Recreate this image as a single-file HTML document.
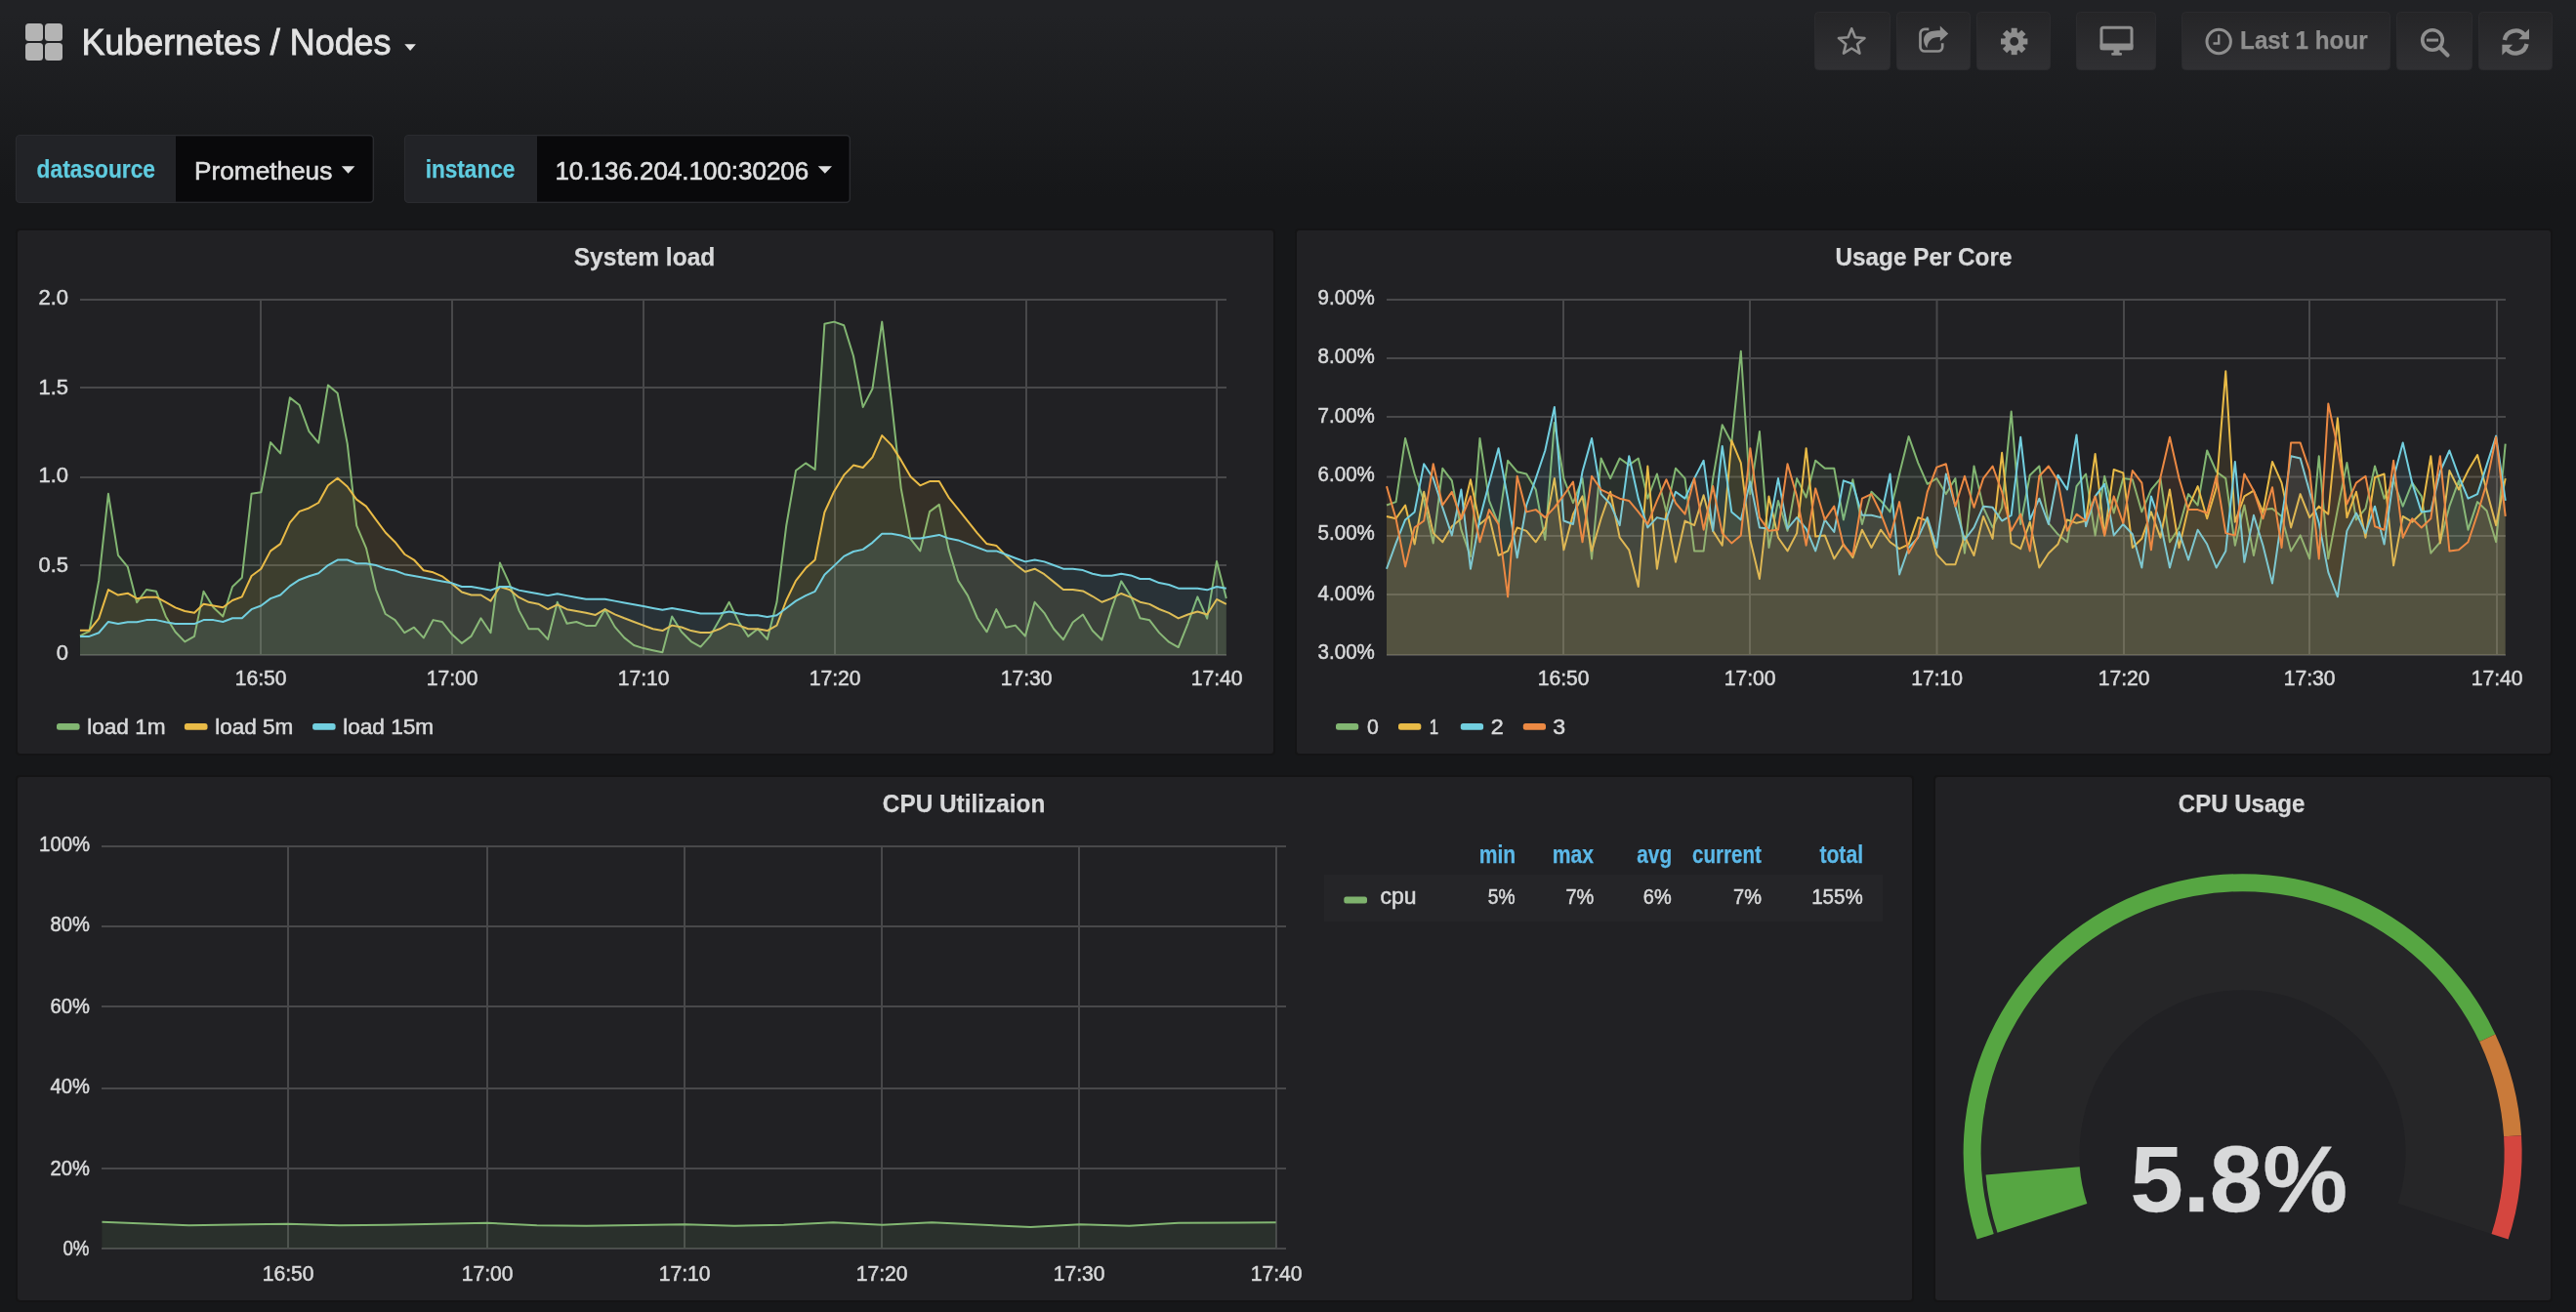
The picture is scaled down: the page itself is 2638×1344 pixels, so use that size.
<!DOCTYPE html><html><head><meta charset="utf-8"><title>Kubernetes / Nodes</title>
<style>html,body{margin:0;padding:0;background:#161719;overflow:hidden}svg{display:block;will-change:transform}text{font-family:"Liberation Sans", sans-serif}</style></head><body>
<svg width="2638" height="1344" viewBox="0 0 2638 1344">
<defs>
<linearGradient id="pg" x1="0" y1="0" x2="0" y2="1344" gradientUnits="userSpaceOnUse">
<stop offset="0.01" stop-color="#212225"/><stop offset="0.15" stop-color="#161719"/></linearGradient>
<linearGradient id="bt" x1="0" y1="0" x2="0" y2="1">
<stop offset="0" stop-color="#252527"/><stop offset="1" stop-color="#303033"/></linearGradient>
</defs>
<rect x="0" y="0" width="2638" height="1344" fill="url(#pg)"/>
<rect x="26" y="24" width="18" height="18" rx="3.5" fill="#b4b4b4"/>
<rect x="46" y="24" width="18" height="18" rx="3.5" fill="#b4b4b4"/>
<rect x="26" y="44" width="18" height="18" rx="3.5" fill="#b4b4b4"/>
<rect x="46" y="44" width="18" height="18" rx="3.5" fill="#b4b4b4"/>
<text x="83.41" y="55.8" font-size="36" fill="#e3e3e3" text-anchor="start" font-weight="normal" textLength="317.1" lengthAdjust="spacingAndGlyphs" stroke="#e3e3e3" stroke-width="0.86">Kubernetes / Nodes</text>
<polygon points="414.3,45.2 425.9,45.2 420.1,51.9" fill="#e3e3e3"/>
<rect x="1858.5" y="12.5" width="77" height="59" rx="4" fill="url(#bt)" stroke="#2b2b2e" stroke-width="1"/>
<rect x="1942.5" y="12.5" width="75" height="59" rx="4" fill="url(#bt)" stroke="#2b2b2e" stroke-width="1"/>
<rect x="2024.5" y="12.5" width="75" height="59" rx="4" fill="url(#bt)" stroke="#2b2b2e" stroke-width="1"/>
<rect x="2126.5" y="12.5" width="81" height="59" rx="4" fill="url(#bt)" stroke="#2b2b2e" stroke-width="1"/>
<rect x="2234.5" y="12.5" width="213" height="59" rx="4" fill="url(#bt)" stroke="#2b2b2e" stroke-width="1"/>
<rect x="2454.5" y="12.5" width="77" height="59" rx="4" fill="url(#bt)" stroke="#2b2b2e" stroke-width="1"/>
<rect x="2538.5" y="12.5" width="75" height="59" rx="4" fill="url(#bt)" stroke="#2b2b2e" stroke-width="1"/>
<polygon points="1896.2,29.3 1899.84,38.28 1909.51,38.97 1902.1,45.22 1904.43,54.63 1896.2,49.5 1887.97,54.63 1890.3,45.22 1882.89,38.97 1892.56,38.28" fill="none" stroke="#8e8e8e" stroke-width="2.6" stroke-linejoin="round"/>
<path d="M1975.3 29.9 H1971 a4.5 4.5 0 0 0 -4.5 4.5 V48 a4.5 4.5 0 0 0 4.5 4.5 H1984.7 a4.5 4.5 0 0 0 4.5 -4.5 V44.2" fill="none" stroke="#8e8e8e" stroke-width="2.7"/>
<path d="M1986.8 26.6 L1995.2 34.5 L1986.8 42.3 V38 C1978.5 37.6 1974.2 41.5 1973.4 49.3 C1969.6 44.5 1968.8 38.8 1972.2 35.2 C1975.2 32.2 1980 31.3 1986.8 31.3 Z" fill="#8e8e8e"/>
<rect x="2059.7" y="28.75" width="6" height="7" fill="#8e8e8e" transform="rotate(0 2062.7 42.45)"/><rect x="2059.7" y="28.75" width="6" height="7" fill="#8e8e8e" transform="rotate(45 2062.7 42.45)"/><rect x="2059.7" y="28.75" width="6" height="7" fill="#8e8e8e" transform="rotate(90 2062.7 42.45)"/><rect x="2059.7" y="28.75" width="6" height="7" fill="#8e8e8e" transform="rotate(135 2062.7 42.45)"/><rect x="2059.7" y="28.75" width="6" height="7" fill="#8e8e8e" transform="rotate(180 2062.7 42.45)"/><rect x="2059.7" y="28.75" width="6" height="7" fill="#8e8e8e" transform="rotate(225 2062.7 42.45)"/><rect x="2059.7" y="28.75" width="6" height="7" fill="#8e8e8e" transform="rotate(270 2062.7 42.45)"/><rect x="2059.7" y="28.75" width="6" height="7" fill="#8e8e8e" transform="rotate(315 2062.7 42.45)"/>
<circle cx="2062.7" cy="42.45" r="7.1" fill="none" stroke="#8e8e8e" stroke-width="5.4"/>
<rect x="2152" y="28.2" width="31" height="21.5" rx="2" fill="none" stroke="#8e8e8e" stroke-width="3"/>
<rect x="2150.6" y="44.5" width="33.8" height="6.7" rx="1.5" fill="#8e8e8e"/>
<rect x="2164.5" y="51" width="6" height="3.5" fill="#8e8e8e"/>
<rect x="2162.2" y="54" width="10.8" height="2.7" rx="1" fill="#8e8e8e"/>
<circle cx="2272.2" cy="42.5" r="12.2" fill="none" stroke="#8e8e8e" stroke-width="3"/>
<path d="M2272.2 35.5 V44.5 H2266.5" fill="none" stroke="#8e8e8e" stroke-width="2.4"/>
<text x="2294.09" y="50" font-size="26.5" fill="#8e8e8e" text-anchor="start" font-weight="bold" textLength="130.56" lengthAdjust="spacingAndGlyphs" stroke="#8e8e8e" stroke-width="0.25">Last 1 hour</text>
<circle cx="2491" cy="41" r="10.3" fill="none" stroke="#8e8e8e" stroke-width="3.6"/>
<path d="M2498.5 48.5 L2506.5 56.5" stroke="#8e8e8e" stroke-width="4.2" stroke-linecap="round"/>
<rect x="2485" y="39.6" width="12" height="3" fill="#8e8e8e"/>
<path d="M2564.9 41 A11.6 11.6 0 0 1 2585.2 35.6" fill="none" stroke="#8e8e8e" stroke-width="4.4"/>
<polygon points="2590,29.4 2590,40.3 2579.2,40.3" fill="#8e8e8e"/>
<path d="M2587.5 45 A11.6 11.6 0 0 1 2567.2 50.4" fill="none" stroke="#8e8e8e" stroke-width="4.4"/>
<polygon points="2562.4,56.5 2562.4,45.7 2573.2,45.7" fill="#8e8e8e"/>
<rect x="16.5" y="138.5" width="366" height="69" rx="4" fill="#222327" stroke="#2a2b2f" stroke-width="1.2"/>
<path d="M180 139.5 H378.5 a3 3 0 0 1 3 3 V203.5 a3 3 0 0 1 -3 3 H180 Z" fill="#09090b"/>
<text x="37.62" y="181.8" font-size="26" fill="#5fcce0" text-anchor="start" font-weight="bold" textLength="121.42" lengthAdjust="spacingAndGlyphs" stroke="#5fcce0" stroke-width="0.25">datasource</text>
<text x="199.09" y="183.7" font-size="26" fill="#dedfe0" text-anchor="start" font-weight="normal" textLength="141.2" lengthAdjust="spacingAndGlyphs" stroke="#dedfe0" stroke-width="0.62">Prometheus</text>
<polygon points="349.8,170.2 363.4,170.2 356.6,177.8" fill="#dedfe0"/>
<rect x="414.5" y="138.5" width="456" height="69" rx="4" fill="#222327" stroke="#2a2b2f" stroke-width="1.2"/>
<path d="M550 139.5 H866.5 a3 3 0 0 1 3 3 V203.5 a3 3 0 0 1 -3 3 H550 Z" fill="#09090b"/>
<text x="435.63" y="181.8" font-size="26" fill="#5fcce0" text-anchor="start" font-weight="bold" textLength="91.81" lengthAdjust="spacingAndGlyphs" stroke="#5fcce0" stroke-width="0.25">instance</text>
<text x="568.4" y="183.7" font-size="26" fill="#dedfe0" text-anchor="start" font-weight="normal" textLength="259.86" lengthAdjust="spacingAndGlyphs" stroke="#dedfe0" stroke-width="0.62">10.136.204.100:30206</text>
<polygon points="837.7,170.2 852,170.2 844.85,177.8" fill="#dedfe0"/>
<rect x="16" y="234" width="1290" height="540" rx="4.5" fill="#141415"/>
<rect x="18" y="236" width="1286" height="536" rx="3" fill="#212124"/>
<rect x="1326" y="234" width="1288" height="540" rx="4.5" fill="#141415"/>
<rect x="1328" y="236" width="1284" height="536" rx="3" fill="#212124"/>
<rect x="16" y="794" width="1944" height="540" rx="4.5" fill="#141415"/>
<rect x="18" y="796" width="1940" height="536" rx="3" fill="#212124"/>
<rect x="1980" y="794" width="634" height="540" rx="4.5" fill="#141415"/>
<rect x="1982" y="796" width="630" height="536" rx="3" fill="#212124"/>
<text x="587.76" y="271.8" font-size="26" fill="#d8d9da" text-anchor="start" font-weight="bold" textLength="144.55" lengthAdjust="spacingAndGlyphs" stroke="#d8d9da" stroke-width="0.25">System load</text>
<text x="1879.57" y="272" font-size="26" fill="#d8d9da" text-anchor="start" font-weight="bold" textLength="180.85" lengthAdjust="spacingAndGlyphs" stroke="#d8d9da" stroke-width="0.25">Usage Per Core</text>
<text x="903.86" y="832" font-size="26" fill="#d8d9da" text-anchor="start" font-weight="bold" textLength="166.4" lengthAdjust="spacingAndGlyphs" stroke="#d8d9da" stroke-width="0.25">CPU Utilizaion</text>
<text x="2230.77" y="831.8" font-size="26" fill="#d8d9da" text-anchor="start" font-weight="bold" textLength="129.67" lengthAdjust="spacingAndGlyphs" stroke="#d8d9da" stroke-width="0.25">CPU Usage</text>
<path d="M82 307 H1256 M82 397 H1256 M82 489 H1256 M82 579 H1256 M82 671 H1256 M267 306 V672 M463 306 V672 M659 306 V672 M855 306 V672 M1051 306 V672 M1246 306 V672" stroke="rgba(160,160,163,0.31)" stroke-width="2" fill="none"/>
<path d="M81.95 651.28 L91.4 646.71 L101.16 594.88 L110.91 505.85 L120.98 568.96 L130.73 580.55 L140.18 617.13 L149.94 604.02 L160 605.85 L169.76 631.46 L179.51 647.32 L189.27 657.38 L199.02 651.89 L208.48 605.85 L218.54 622.32 L228.29 631.46 L238.05 600.98 L247.8 591.83 L257.56 505.85 L267.32 504.33 L277.07 453.11 L287.13 464.39 L296.89 407.38 L306.65 415 L316.4 441.83 L326.16 453.72 L335.91 394.57 L345.67 402.8 L355.73 454.63 L365.18 538.48 L374.94 561.34 L385 604.02 L394.76 629.02 L404.51 635.12 L414.27 648.23 L424.02 642.74 L433.78 653.41 L443.54 635.12 L452.8 636.95 L462.87 649.76 L472.93 658.9 L482.68 651.59 L492.44 633.29 L502.5 648.23 L511.95 576.59 L521.71 597.93 L531.46 625.37 L541.52 644.27 L551.28 644.27 L561.04 654.94 L570.79 616.83 L580.55 638.78 L590.3 636.95 L600.06 640.91 L609.82 640.91 L619.57 624.15 L629.63 642.13 L639.39 653.41 L649.15 661.04 L658.9 664.09 L668.66 666.22 L678.41 668.35 L688.17 631.46 L697.93 647.32 L707.68 657.07 L717.44 662.56 L727.2 651.59 L736.95 634.51 L746.71 616.83 L756.46 636.95 L766.22 651.89 L775.98 644.27 L785.73 654.94 L795.49 616.83 L805.24 538.48 L815 482.07 L825.06 474.45 L834.63 480.85 L844.39 331.77 L854.15 329.63 L864.21 333.29 L873.96 364.7 L883.72 417.13 L893.48 398.23 L903.23 329.63 L912.99 411.95 L922.74 500.37 L932.5 552.2 L942.26 564.39 L952.01 524.15 L961.77 516.83 L971.52 562.87 L981.28 594.88 L991.04 610.12 L1000.79 632.99 L1010.55 647.32 L1020.3 624.15 L1030.06 642.74 L1039.82 640.61 L1049.88 651.59 L1059.63 616.83 L1069.39 627.8 L1079.15 644.27 L1088.9 655.24 L1098.66 637.56 L1108.96 629.54 L1118.78 645.98 L1128.39 655.58 L1138.42 623.56 L1148.24 595.39 L1158.06 610.76 L1167.45 633.17 L1177.27 635.3 L1187.09 648.11 L1197.12 657.72 L1206.72 663.05 L1216.54 638.51 L1226.36 611.4 L1236.18 633.6 L1246 574.9 L1255.82 612.89 L1255.82 671 L81.95 671 Z" fill="#82b672" fill-opacity="0.1" stroke="none"/>
<path d="M81.95 651.28 L91.4 646.71 L101.16 594.88 L110.91 505.85 L120.98 568.96 L130.73 580.55 L140.18 617.13 L149.94 604.02 L160 605.85 L169.76 631.46 L179.51 647.32 L189.27 657.38 L199.02 651.89 L208.48 605.85 L218.54 622.32 L228.29 631.46 L238.05 600.98 L247.8 591.83 L257.56 505.85 L267.32 504.33 L277.07 453.11 L287.13 464.39 L296.89 407.38 L306.65 415 L316.4 441.83 L326.16 453.72 L335.91 394.57 L345.67 402.8 L355.73 454.63 L365.18 538.48 L374.94 561.34 L385 604.02 L394.76 629.02 L404.51 635.12 L414.27 648.23 L424.02 642.74 L433.78 653.41 L443.54 635.12 L452.8 636.95 L462.87 649.76 L472.93 658.9 L482.68 651.59 L492.44 633.29 L502.5 648.23 L511.95 576.59 L521.71 597.93 L531.46 625.37 L541.52 644.27 L551.28 644.27 L561.04 654.94 L570.79 616.83 L580.55 638.78 L590.3 636.95 L600.06 640.91 L609.82 640.91 L619.57 624.15 L629.63 642.13 L639.39 653.41 L649.15 661.04 L658.9 664.09 L668.66 666.22 L678.41 668.35 L688.17 631.46 L697.93 647.32 L707.68 657.07 L717.44 662.56 L727.2 651.59 L736.95 634.51 L746.71 616.83 L756.46 636.95 L766.22 651.89 L775.98 644.27 L785.73 654.94 L795.49 616.83 L805.24 538.48 L815 482.07 L825.06 474.45 L834.63 480.85 L844.39 331.77 L854.15 329.63 L864.21 333.29 L873.96 364.7 L883.72 417.13 L893.48 398.23 L903.23 329.63 L912.99 411.95 L922.74 500.37 L932.5 552.2 L942.26 564.39 L952.01 524.15 L961.77 516.83 L971.52 562.87 L981.28 594.88 L991.04 610.12 L1000.79 632.99 L1010.55 647.32 L1020.3 624.15 L1030.06 642.74 L1039.82 640.61 L1049.88 651.59 L1059.63 616.83 L1069.39 627.8 L1079.15 644.27 L1088.9 655.24 L1098.66 637.56 L1108.96 629.54 L1118.78 645.98 L1128.39 655.58 L1138.42 623.56 L1148.24 595.39 L1158.06 610.76 L1167.45 633.17 L1177.27 635.3 L1187.09 648.11 L1197.12 657.72 L1206.72 663.05 L1216.54 638.51 L1226.36 611.4 L1236.18 633.6 L1246 574.9 L1255.82 612.89" fill="none" stroke="#82b672" stroke-width="2" stroke-linejoin="round"/>
<path d="M81.95 645.79 L91.4 645.79 L101.16 633.6 L110.91 604.02 L120.98 609.51 L130.73 607.68 L140.18 613.17 L149.94 611.65 L160 611.65 L169.76 616.83 L179.51 622.32 L189.27 625.98 L199.02 627.8 L208.48 618.66 L218.54 620.49 L228.29 622.32 L238.05 615 L247.8 611.34 L257.56 590 L267.32 582.68 L277.07 564.39 L287.13 557.07 L296.89 535.43 L306.65 523.84 L316.4 520.49 L326.16 515 L335.91 497.32 L345.67 489.7 L355.73 498.54 L365.18 511.65 L374.94 518.66 L385 532.38 L394.76 545.49 L404.51 555.24 L414.27 567.74 L424.02 573.54 L433.78 584.21 L443.54 586.34 L452.8 590.3 L462.87 597.93 L472.93 606.46 L482.68 609.51 L492.44 609.51 L502.5 615.61 L511.95 600.98 L521.71 604.02 L531.46 611.95 L541.52 616.83 L551.28 618.66 L561.04 624.15 L570.79 619.27 L580.55 624.15 L590.3 625.98 L600.06 627.8 L609.82 629.94 L619.57 624.15 L629.63 629.33 L639.39 633.29 L649.15 636.95 L658.9 640.61 L668.66 644.27 L678.41 646.1 L688.17 640.61 L697.93 642.44 L707.68 646.1 L717.44 647.93 L727.2 647.93 L736.95 644.27 L746.71 638.78 L756.46 640.61 L766.22 644.27 L775.98 644.27 L785.73 646.1 L795.49 640.61 L805.24 615 L815 594.88 L825.06 582.07 L834.63 573.54 L844.39 524.76 L854.15 503.41 L864.21 486.65 L873.96 476.59 L883.72 479.02 L893.48 468.35 L903.23 446.1 L912.99 456.16 L922.74 471.4 L932.5 488.17 L942.26 497.32 L952.01 493.05 L961.77 493.05 L971.52 509.51 L981.28 521.71 L991.04 533.9 L1000.79 546.1 L1010.55 557.07 L1020.3 558.9 L1030.06 568.96 L1039.82 578.11 L1049.88 585.73 L1059.63 582.68 L1069.39 588.17 L1079.15 596.1 L1088.9 604.02 L1098.66 604.02 L1108.96 605.42 L1118.78 610.76 L1128.39 616.73 L1138.42 612.89 L1148.24 607.98 L1158.06 611.82 L1167.45 616.73 L1177.27 618.87 L1187.09 623.99 L1197.12 627.83 L1206.72 633.38 L1216.54 629.54 L1226.36 626.55 L1236.18 629.54 L1246 613.96 L1255.82 618.87 L1255.82 671 L81.95 671 Z" fill="#e9bb47" fill-opacity="0.1" stroke="none"/>
<path d="M81.95 645.79 L91.4 645.79 L101.16 633.6 L110.91 604.02 L120.98 609.51 L130.73 607.68 L140.18 613.17 L149.94 611.65 L160 611.65 L169.76 616.83 L179.51 622.32 L189.27 625.98 L199.02 627.8 L208.48 618.66 L218.54 620.49 L228.29 622.32 L238.05 615 L247.8 611.34 L257.56 590 L267.32 582.68 L277.07 564.39 L287.13 557.07 L296.89 535.43 L306.65 523.84 L316.4 520.49 L326.16 515 L335.91 497.32 L345.67 489.7 L355.73 498.54 L365.18 511.65 L374.94 518.66 L385 532.38 L394.76 545.49 L404.51 555.24 L414.27 567.74 L424.02 573.54 L433.78 584.21 L443.54 586.34 L452.8 590.3 L462.87 597.93 L472.93 606.46 L482.68 609.51 L492.44 609.51 L502.5 615.61 L511.95 600.98 L521.71 604.02 L531.46 611.95 L541.52 616.83 L551.28 618.66 L561.04 624.15 L570.79 619.27 L580.55 624.15 L590.3 625.98 L600.06 627.8 L609.82 629.94 L619.57 624.15 L629.63 629.33 L639.39 633.29 L649.15 636.95 L658.9 640.61 L668.66 644.27 L678.41 646.1 L688.17 640.61 L697.93 642.44 L707.68 646.1 L717.44 647.93 L727.2 647.93 L736.95 644.27 L746.71 638.78 L756.46 640.61 L766.22 644.27 L775.98 644.27 L785.73 646.1 L795.49 640.61 L805.24 615 L815 594.88 L825.06 582.07 L834.63 573.54 L844.39 524.76 L854.15 503.41 L864.21 486.65 L873.96 476.59 L883.72 479.02 L893.48 468.35 L903.23 446.1 L912.99 456.16 L922.74 471.4 L932.5 488.17 L942.26 497.32 L952.01 493.05 L961.77 493.05 L971.52 509.51 L981.28 521.71 L991.04 533.9 L1000.79 546.1 L1010.55 557.07 L1020.3 558.9 L1030.06 568.96 L1039.82 578.11 L1049.88 585.73 L1059.63 582.68 L1069.39 588.17 L1079.15 596.1 L1088.9 604.02 L1098.66 604.02 L1108.96 605.42 L1118.78 610.76 L1128.39 616.73 L1138.42 612.89 L1148.24 607.98 L1158.06 611.82 L1167.45 616.73 L1177.27 618.87 L1187.09 623.99 L1197.12 627.83 L1206.72 633.38 L1216.54 629.54 L1226.36 626.55 L1236.18 629.54 L1246 613.96 L1255.82 618.87" fill="none" stroke="#e9bb47" stroke-width="2" stroke-linejoin="round"/>
<path d="M81.95 651.89 L91.4 651.89 L101.16 648.23 L110.91 636.95 L120.98 639.09 L130.73 637.26 L140.18 637.26 L149.94 635.12 L160 635.12 L169.76 637.26 L179.51 639.09 L189.27 639.09 L199.02 639.09 L208.48 635.12 L218.54 635.12 L228.29 636.95 L238.05 633.29 L247.8 633.29 L257.56 624.15 L267.32 620.49 L277.07 613.17 L287.13 609.51 L296.89 600.37 L306.65 593.96 L316.4 590.3 L326.16 587.26 L335.91 579.02 L345.67 573.54 L355.73 573.54 L365.18 577.2 L374.94 577.2 L385 579.02 L394.76 582.68 L404.51 584.51 L414.27 588.17 L424.02 590 L433.78 591.83 L443.54 593.66 L452.8 595.49 L462.87 597.32 L472.93 600.98 L482.68 600.98 L492.44 602.8 L502.5 604.63 L511.95 600.98 L521.71 600.98 L531.46 604.63 L541.52 606.46 L551.28 608.29 L561.04 610.12 L570.79 608.29 L580.55 610.12 L590.3 611.95 L600.06 613.78 L609.82 613.78 L619.57 613.78 L629.63 615.61 L639.39 617.44 L649.15 619.27 L658.9 621.1 L668.66 622.93 L678.41 624.76 L688.17 622.93 L697.93 624.76 L707.68 626.59 L717.44 628.41 L727.2 628.41 L736.95 628.41 L746.71 626.59 L756.46 628.41 L766.22 630.24 L775.98 630.24 L785.73 632.07 L795.49 630.24 L805.24 622.93 L815 615.61 L825.06 610.12 L834.63 605.85 L844.39 588.78 L854.15 579.63 L864.21 569.88 L873.96 565 L883.72 562.87 L893.48 555.85 L903.23 546.71 L912.99 546.71 L922.74 548.54 L932.5 551.59 L942.26 551.59 L952.01 549.76 L961.77 547.93 L971.52 551.59 L981.28 553.41 L991.04 557.07 L1000.79 560.73 L1010.55 564.39 L1020.3 564.39 L1030.06 568.05 L1039.82 571.71 L1049.88 575.37 L1059.63 573.54 L1069.39 575.37 L1079.15 579.02 L1088.9 582.68 L1098.66 582.68 L1108.96 584.08 L1118.78 587.71 L1128.39 589.84 L1138.42 589.84 L1148.24 587.71 L1158.06 589.41 L1167.45 593.04 L1177.27 593.04 L1187.09 597.1 L1197.12 599.02 L1206.72 602.65 L1216.54 602.65 L1226.36 602.65 L1236.18 604.35 L1246 600.94 L1255.82 602.65 L1255.82 671 L81.95 671 Z" fill="#72cfdf" fill-opacity="0.1" stroke="none"/>
<path d="M81.95 651.89 L91.4 651.89 L101.16 648.23 L110.91 636.95 L120.98 639.09 L130.73 637.26 L140.18 637.26 L149.94 635.12 L160 635.12 L169.76 637.26 L179.51 639.09 L189.27 639.09 L199.02 639.09 L208.48 635.12 L218.54 635.12 L228.29 636.95 L238.05 633.29 L247.8 633.29 L257.56 624.15 L267.32 620.49 L277.07 613.17 L287.13 609.51 L296.89 600.37 L306.65 593.96 L316.4 590.3 L326.16 587.26 L335.91 579.02 L345.67 573.54 L355.73 573.54 L365.18 577.2 L374.94 577.2 L385 579.02 L394.76 582.68 L404.51 584.51 L414.27 588.17 L424.02 590 L433.78 591.83 L443.54 593.66 L452.8 595.49 L462.87 597.32 L472.93 600.98 L482.68 600.98 L492.44 602.8 L502.5 604.63 L511.95 600.98 L521.71 600.98 L531.46 604.63 L541.52 606.46 L551.28 608.29 L561.04 610.12 L570.79 608.29 L580.55 610.12 L590.3 611.95 L600.06 613.78 L609.82 613.78 L619.57 613.78 L629.63 615.61 L639.39 617.44 L649.15 619.27 L658.9 621.1 L668.66 622.93 L678.41 624.76 L688.17 622.93 L697.93 624.76 L707.68 626.59 L717.44 628.41 L727.2 628.41 L736.95 628.41 L746.71 626.59 L756.46 628.41 L766.22 630.24 L775.98 630.24 L785.73 632.07 L795.49 630.24 L805.24 622.93 L815 615.61 L825.06 610.12 L834.63 605.85 L844.39 588.78 L854.15 579.63 L864.21 569.88 L873.96 565 L883.72 562.87 L893.48 555.85 L903.23 546.71 L912.99 546.71 L922.74 548.54 L932.5 551.59 L942.26 551.59 L952.01 549.76 L961.77 547.93 L971.52 551.59 L981.28 553.41 L991.04 557.07 L1000.79 560.73 L1010.55 564.39 L1020.3 564.39 L1030.06 568.05 L1039.82 571.71 L1049.88 575.37 L1059.63 573.54 L1069.39 575.37 L1079.15 579.02 L1088.9 582.68 L1098.66 582.68 L1108.96 584.08 L1118.78 587.71 L1128.39 589.84 L1138.42 589.84 L1148.24 587.71 L1158.06 589.41 L1167.45 593.04 L1177.27 593.04 L1187.09 597.1 L1197.12 599.02 L1206.72 602.65 L1216.54 602.65 L1226.36 602.65 L1236.18 604.35 L1246 600.94 L1255.82 602.65" fill="none" stroke="#72cfdf" stroke-width="2" stroke-linejoin="round"/>
<text x="70" y="311.9" font-size="22" fill="#d8d9da" text-anchor="end" font-weight="normal" stroke="#d8d9da" stroke-width="0.53">2.0</text>
<text x="70" y="404" font-size="22" fill="#d8d9da" text-anchor="end" font-weight="normal" stroke="#d8d9da" stroke-width="0.53">1.5</text>
<text x="70" y="493.9" font-size="22" fill="#d8d9da" text-anchor="end" font-weight="normal" stroke="#d8d9da" stroke-width="0.53">1.0</text>
<text x="70" y="585.9" font-size="22" fill="#d8d9da" text-anchor="end" font-weight="normal" stroke="#d8d9da" stroke-width="0.53">0.5</text>
<text x="70" y="675.7" font-size="22" fill="#d8d9da" text-anchor="end" font-weight="normal" stroke="#d8d9da" stroke-width="0.53">0</text>
<text x="267.2" y="701.7" font-size="22" fill="#d8d9da" text-anchor="middle" font-weight="normal" textLength="52.82" lengthAdjust="spacingAndGlyphs" stroke="#d8d9da" stroke-width="0.53">16:50</text>
<text x="463.2" y="701.7" font-size="22" fill="#d8d9da" text-anchor="middle" font-weight="normal" textLength="52.82" lengthAdjust="spacingAndGlyphs" stroke="#d8d9da" stroke-width="0.53">17:00</text>
<text x="659.2" y="701.7" font-size="22" fill="#d8d9da" text-anchor="middle" font-weight="normal" textLength="52.82" lengthAdjust="spacingAndGlyphs" stroke="#d8d9da" stroke-width="0.53">17:10</text>
<text x="855.2" y="701.7" font-size="22" fill="#d8d9da" text-anchor="middle" font-weight="normal" textLength="52.82" lengthAdjust="spacingAndGlyphs" stroke="#d8d9da" stroke-width="0.53">17:20</text>
<text x="1051.2" y="701.7" font-size="22" fill="#d8d9da" text-anchor="middle" font-weight="normal" textLength="52.82" lengthAdjust="spacingAndGlyphs" stroke="#d8d9da" stroke-width="0.53">17:30</text>
<text x="1246.2" y="701.7" font-size="22" fill="#d8d9da" text-anchor="middle" font-weight="normal" textLength="52.82" lengthAdjust="spacingAndGlyphs" stroke="#d8d9da" stroke-width="0.53">17:40</text>
<rect x="58" y="741" width="23.6" height="6.8" rx="2.5" fill="#82b672"/>
<text x="89.2" y="751.8" font-size="22.5" fill="#d8d9da" text-anchor="start" font-weight="normal" textLength="80.35" lengthAdjust="spacingAndGlyphs" stroke="#d8d9da" stroke-width="0.54">load 1m</text>
<rect x="188.9" y="741" width="23.6" height="6.8" rx="2.5" fill="#e9bb47"/>
<text x="220.3" y="751.8" font-size="22.5" fill="#d8d9da" text-anchor="start" font-weight="normal" textLength="80.05" lengthAdjust="spacingAndGlyphs" stroke="#d8d9da" stroke-width="0.54">load 5m</text>
<rect x="320.1" y="741" width="23.5" height="6.8" rx="2.5" fill="#72cfdf"/>
<text x="351.2" y="751.8" font-size="22.5" fill="#d8d9da" text-anchor="start" font-weight="normal" textLength="92.97" lengthAdjust="spacingAndGlyphs" stroke="#d8d9da" stroke-width="0.54">load 15m</text>
<path d="M1420 307 H2566 M1420 367 H2566 M1420 427 H2566 M1420 488.5 H2566 M1420 549 H2566 M1420 609 H2566 M1420 671 H2566 M1601 306 V671 M1792 306 V671 M1983.5 306 V671 M2175 306 V671 M2365 306 V671 M2557 306 V671" stroke="rgba(160,160,163,0.31)" stroke-width="2" fill="none"/>
<path d="M1420 517.54 L1429.55 514.11 L1439.1 448.93 L1448.64 485.52 L1458.19 512.96 L1467.74 556.42 L1477.29 479.8 L1486.83 492.38 L1496.38 542.69 L1505.93 570.14 L1515.47 448.93 L1525.02 512.96 L1534.57 536.98 L1544.12 471.8 L1553.66 483.23 L1563.21 485.52 L1572.76 501.53 L1582.31 552.98 L1591.86 432.92 L1601.4 490.09 L1610.95 515.25 L1620.5 490.09 L1630.05 572.42 L1639.59 469.51 L1649.14 490.09 L1658.69 469.51 L1668.23 476.37 L1677.78 469.51 L1687.33 510.67 L1696.88 485.52 L1706.42 524.4 L1715.97 479.8 L1725.52 490.09 L1735.07 564.42 L1744.61 564.42 L1754.16 490.09 L1763.71 435.2 L1773.26 453.5 L1782.8 359.73 L1792.35 506.1 L1801.9 442.06 L1811.45 560.99 L1820.99 512.96 L1830.54 543.84 L1840.09 490.09 L1849.64 509.53 L1859.18 471.8 L1868.73 479.8 L1878.28 479.8 L1887.83 532.4 L1897.38 491.23 L1906.92 536.98 L1916.47 503.81 L1926.02 512.96 L1935.56 524.4 L1945.11 485.52 L1954.66 447.1 L1964.21 474.08 L1973.75 495.81 L1983.3 490.09 L1992.85 506.1 L2002.4 490.09 L2011.94 566.71 L2021.49 477.51 L2031.04 519.82 L2040.59 540.41 L2050.13 519.82 L2059.68 421.48 L2069.23 536.98 L2078.78 486.66 L2088.32 477.51 L2097.87 535.83 L2107.42 547.27 L2116.97 555.27 L2126.51 498.1 L2136.06 485.52 L2145.61 548.41 L2155.16 487.8 L2164.7 525.54 L2174.25 490.09 L2183.8 491.23 L2193.35 524.4 L2202.89 501.53 L2212.44 490.09 L2221.99 555.27 L2231.54 540.41 L2241.09 506.1 L2250.63 517.54 L2260.18 461.5 L2269.73 483.23 L2279.27 490.09 L2288.82 558.7 L2298.37 517.54 L2307.92 568.99 L2317.46 522.11 L2327.01 520.97 L2336.56 528.97 L2346.11 564.42 L2355.65 548.41 L2365.2 572.42 L2374.75 467.22 L2384.3 572.42 L2393.84 522.11 L2403.39 474.08 L2412.94 532.4 L2422.49 520.97 L2432.03 477.51 L2441.58 510.67 L2451.13 492.38 L2460.68 518.68 L2470.22 494.67 L2479.77 508.39 L2489.32 566.71 L2498.87 555.27 L2508.41 518.68 L2517.96 492.38 L2527.51 542.69 L2537.06 514.11 L2546.6 523.25 L2556.15 555.27 L2565.7 454.64 L2565.7 671 L1420 671 Z" fill="#82b672" fill-opacity="0.1" stroke="none"/>
<path d="M1420 517.54 L1429.55 514.11 L1439.1 448.93 L1448.64 485.52 L1458.19 512.96 L1467.74 556.42 L1477.29 479.8 L1486.83 492.38 L1496.38 542.69 L1505.93 570.14 L1515.47 448.93 L1525.02 512.96 L1534.57 536.98 L1544.12 471.8 L1553.66 483.23 L1563.21 485.52 L1572.76 501.53 L1582.31 552.98 L1591.86 432.92 L1601.4 490.09 L1610.95 515.25 L1620.5 490.09 L1630.05 572.42 L1639.59 469.51 L1649.14 490.09 L1658.69 469.51 L1668.23 476.37 L1677.78 469.51 L1687.33 510.67 L1696.88 485.52 L1706.42 524.4 L1715.97 479.8 L1725.52 490.09 L1735.07 564.42 L1744.61 564.42 L1754.16 490.09 L1763.71 435.2 L1773.26 453.5 L1782.8 359.73 L1792.35 506.1 L1801.9 442.06 L1811.45 560.99 L1820.99 512.96 L1830.54 543.84 L1840.09 490.09 L1849.64 509.53 L1859.18 471.8 L1868.73 479.8 L1878.28 479.8 L1887.83 532.4 L1897.38 491.23 L1906.92 536.98 L1916.47 503.81 L1926.02 512.96 L1935.56 524.4 L1945.11 485.52 L1954.66 447.1 L1964.21 474.08 L1973.75 495.81 L1983.3 490.09 L1992.85 506.1 L2002.4 490.09 L2011.94 566.71 L2021.49 477.51 L2031.04 519.82 L2040.59 540.41 L2050.13 519.82 L2059.68 421.48 L2069.23 536.98 L2078.78 486.66 L2088.32 477.51 L2097.87 535.83 L2107.42 547.27 L2116.97 555.27 L2126.51 498.1 L2136.06 485.52 L2145.61 548.41 L2155.16 487.8 L2164.7 525.54 L2174.25 490.09 L2183.8 491.23 L2193.35 524.4 L2202.89 501.53 L2212.44 490.09 L2221.99 555.27 L2231.54 540.41 L2241.09 506.1 L2250.63 517.54 L2260.18 461.5 L2269.73 483.23 L2279.27 490.09 L2288.82 558.7 L2298.37 517.54 L2307.92 568.99 L2317.46 522.11 L2327.01 520.97 L2336.56 528.97 L2346.11 564.42 L2355.65 548.41 L2365.2 572.42 L2374.75 467.22 L2384.3 572.42 L2393.84 522.11 L2403.39 474.08 L2412.94 532.4 L2422.49 520.97 L2432.03 477.51 L2441.58 510.67 L2451.13 492.38 L2460.68 518.68 L2470.22 494.67 L2479.77 508.39 L2489.32 566.71 L2498.87 555.27 L2508.41 518.68 L2517.96 492.38 L2527.51 542.69 L2537.06 514.11 L2546.6 523.25 L2556.15 555.27 L2565.7 454.64" fill="none" stroke="#82b672" stroke-width="2" stroke-linejoin="round"/>
<path d="M1420 528.97 L1429.55 531.26 L1439.1 517.54 L1448.64 557.56 L1458.19 503.81 L1467.74 546.12 L1477.29 555.27 L1486.83 539.26 L1496.38 531.26 L1505.93 491.23 L1515.47 536.98 L1525.02 528.97 L1534.57 568.99 L1544.12 564.42 L1553.66 540.41 L1563.21 543.84 L1572.76 555.27 L1582.31 540.41 L1591.86 490.09 L1601.4 563.28 L1610.95 526.68 L1620.5 508.39 L1630.05 564.42 L1639.59 531.26 L1649.14 503.81 L1658.69 550.7 L1668.23 563.28 L1677.78 601.01 L1687.33 477.51 L1696.88 582.72 L1706.42 525.54 L1715.97 575.85 L1725.52 533.54 L1735.07 538.12 L1744.61 507.24 L1754.16 543.84 L1763.71 558.7 L1773.26 451.21 L1782.8 474.08 L1792.35 552.98 L1801.9 593.01 L1811.45 508.39 L1820.99 550.7 L1830.54 564.42 L1840.09 546.12 L1849.64 459.22 L1859.18 549.55 L1868.73 548.41 L1878.28 572.42 L1887.83 557.56 L1897.38 571.28 L1906.92 542.69 L1916.47 560.99 L1926.02 542.69 L1935.56 555.27 L1945.11 562.13 L1954.66 557.56 L1964.21 530.11 L1973.75 533.54 L1983.3 567.85 L1992.85 578.14 L2002.4 578.14 L2011.94 549.55 L2021.49 568.99 L2031.04 528.97 L2040.59 551.84 L2050.13 463.79 L2059.68 556.42 L2069.23 562.13 L2078.78 534.69 L2088.32 581.57 L2097.87 566.71 L2107.42 557.56 L2116.97 532.4 L2126.51 535.83 L2136.06 533.54 L2145.61 464.93 L2155.16 548.41 L2164.7 480.94 L2174.25 484.37 L2183.8 560.99 L2193.35 551.84 L2202.89 524.4 L2212.44 550.7 L2221.99 501.53 L2231.54 560.99 L2241.09 519.82 L2250.63 498.1 L2260.18 531.26 L2269.73 499.24 L2279.27 380.31 L2288.82 534.69 L2298.37 508.39 L2307.92 502.67 L2317.46 524.4 L2327.01 472.94 L2336.56 494.67 L2346.11 540.41 L2355.65 506.1 L2365.2 530.11 L2374.75 518.68 L2384.3 526.68 L2393.84 428.34 L2403.39 530.11 L2412.94 503.81 L2422.49 550.7 L2432.03 488.95 L2441.58 485.52 L2451.13 579.29 L2460.68 528.97 L2470.22 534.69 L2479.77 525.54 L2489.32 467.22 L2498.87 556.42 L2508.41 482.09 L2517.96 501.53 L2527.51 482.09 L2537.06 466.08 L2546.6 502.67 L2556.15 538.12 L2565.7 490.09 L2565.7 671 L1420 671 Z" fill="#e9bb47" fill-opacity="0.1" stroke="none"/>
<path d="M1420 528.97 L1429.55 531.26 L1439.1 517.54 L1448.64 557.56 L1458.19 503.81 L1467.74 546.12 L1477.29 555.27 L1486.83 539.26 L1496.38 531.26 L1505.93 491.23 L1515.47 536.98 L1525.02 528.97 L1534.57 568.99 L1544.12 564.42 L1553.66 540.41 L1563.21 543.84 L1572.76 555.27 L1582.31 540.41 L1591.86 490.09 L1601.4 563.28 L1610.95 526.68 L1620.5 508.39 L1630.05 564.42 L1639.59 531.26 L1649.14 503.81 L1658.69 550.7 L1668.23 563.28 L1677.78 601.01 L1687.33 477.51 L1696.88 582.72 L1706.42 525.54 L1715.97 575.85 L1725.52 533.54 L1735.07 538.12 L1744.61 507.24 L1754.16 543.84 L1763.71 558.7 L1773.26 451.21 L1782.8 474.08 L1792.35 552.98 L1801.9 593.01 L1811.45 508.39 L1820.99 550.7 L1830.54 564.42 L1840.09 546.12 L1849.64 459.22 L1859.18 549.55 L1868.73 548.41 L1878.28 572.42 L1887.83 557.56 L1897.38 571.28 L1906.92 542.69 L1916.47 560.99 L1926.02 542.69 L1935.56 555.27 L1945.11 562.13 L1954.66 557.56 L1964.21 530.11 L1973.75 533.54 L1983.3 567.85 L1992.85 578.14 L2002.4 578.14 L2011.94 549.55 L2021.49 568.99 L2031.04 528.97 L2040.59 551.84 L2050.13 463.79 L2059.68 556.42 L2069.23 562.13 L2078.78 534.69 L2088.32 581.57 L2097.87 566.71 L2107.42 557.56 L2116.97 532.4 L2126.51 535.83 L2136.06 533.54 L2145.61 464.93 L2155.16 548.41 L2164.7 480.94 L2174.25 484.37 L2183.8 560.99 L2193.35 551.84 L2202.89 524.4 L2212.44 550.7 L2221.99 501.53 L2231.54 560.99 L2241.09 519.82 L2250.63 498.1 L2260.18 531.26 L2269.73 499.24 L2279.27 380.31 L2288.82 534.69 L2298.37 508.39 L2307.92 502.67 L2317.46 524.4 L2327.01 472.94 L2336.56 494.67 L2346.11 540.41 L2355.65 506.1 L2365.2 530.11 L2374.75 518.68 L2384.3 526.68 L2393.84 428.34 L2403.39 530.11 L2412.94 503.81 L2422.49 550.7 L2432.03 488.95 L2441.58 485.52 L2451.13 579.29 L2460.68 528.97 L2470.22 534.69 L2479.77 525.54 L2489.32 467.22 L2498.87 556.42 L2508.41 482.09 L2517.96 501.53 L2527.51 482.09 L2537.06 466.08 L2546.6 502.67 L2556.15 538.12 L2565.7 490.09" fill="none" stroke="#e9bb47" stroke-width="2" stroke-linejoin="round"/>
<path d="M1420 582.72 L1429.55 556.42 L1439.1 532.4 L1448.64 524.4 L1458.19 475.23 L1467.74 490.09 L1477.29 519.82 L1486.83 548.41 L1496.38 501.53 L1505.93 582.72 L1515.47 531.26 L1525.02 494.67 L1534.57 459.22 L1544.12 510.67 L1553.66 571.28 L1563.21 517.54 L1572.76 490.09 L1582.31 461.5 L1591.86 416.91 L1601.4 533.54 L1610.95 536.98 L1620.5 483.23 L1630.05 448.93 L1639.59 506.1 L1649.14 516.39 L1658.69 538.12 L1668.23 467.22 L1677.78 510.67 L1687.33 540.41 L1696.88 530.11 L1706.42 532.4 L1715.97 503.81 L1725.52 510.67 L1735.07 490.09 L1744.61 471.8 L1754.16 543.84 L1763.71 456.93 L1773.26 524.4 L1782.8 532.4 L1792.35 493.52 L1801.9 540.41 L1811.45 541.55 L1820.99 490.09 L1830.54 541.55 L1840.09 530.11 L1849.64 541.55 L1859.18 564.42 L1868.73 532.4 L1878.28 544.98 L1887.83 492.38 L1897.38 495.81 L1906.92 527.83 L1916.47 527.83 L1926.02 530.11 L1935.56 485.52 L1945.11 588.43 L1954.66 560.99 L1964.21 550.7 L1973.75 530.11 L1983.3 560.99 L1992.85 485.52 L2002.4 518.68 L2011.94 552.98 L2021.49 540.41 L2031.04 518.68 L2040.59 519.82 L2050.13 533.54 L2059.68 527.83 L2069.23 447.78 L2078.78 532.4 L2088.32 510.67 L2097.87 536.98 L2107.42 486.66 L2116.97 501.53 L2126.51 445.49 L2136.06 539.26 L2145.61 508.39 L2155.16 495.81 L2164.7 548.41 L2174.25 536.98 L2183.8 547.27 L2193.35 581.57 L2202.89 508.39 L2212.44 535.83 L2221.99 581.57 L2231.54 544.98 L2241.09 573.57 L2250.63 542.69 L2260.18 557.56 L2269.73 581.57 L2279.27 564.42 L2288.82 472.94 L2298.37 575.85 L2307.92 527.83 L2317.46 558.7 L2327.01 597.58 L2336.56 531.26 L2346.11 467.22 L2355.65 469.51 L2365.2 503.81 L2374.75 535.83 L2384.3 586.15 L2393.84 611.3 L2403.39 543.84 L2412.94 525.54 L2422.49 546.12 L2432.03 518.68 L2441.58 557.56 L2451.13 490.09 L2460.68 453.5 L2470.22 494.67 L2479.77 524.4 L2489.32 523.25 L2498.87 483.23 L2508.41 461.5 L2517.96 487.8 L2527.51 510.67 L2537.06 506.1 L2546.6 476.37 L2556.15 446.64 L2565.7 512.96 L2565.7 671 L1420 671 Z" fill="#72cfdf" fill-opacity="0.1" stroke="none"/>
<path d="M1420 582.72 L1429.55 556.42 L1439.1 532.4 L1448.64 524.4 L1458.19 475.23 L1467.74 490.09 L1477.29 519.82 L1486.83 548.41 L1496.38 501.53 L1505.93 582.72 L1515.47 531.26 L1525.02 494.67 L1534.57 459.22 L1544.12 510.67 L1553.66 571.28 L1563.21 517.54 L1572.76 490.09 L1582.31 461.5 L1591.86 416.91 L1601.4 533.54 L1610.95 536.98 L1620.5 483.23 L1630.05 448.93 L1639.59 506.1 L1649.14 516.39 L1658.69 538.12 L1668.23 467.22 L1677.78 510.67 L1687.33 540.41 L1696.88 530.11 L1706.42 532.4 L1715.97 503.81 L1725.52 510.67 L1735.07 490.09 L1744.61 471.8 L1754.16 543.84 L1763.71 456.93 L1773.26 524.4 L1782.8 532.4 L1792.35 493.52 L1801.9 540.41 L1811.45 541.55 L1820.99 490.09 L1830.54 541.55 L1840.09 530.11 L1849.64 541.55 L1859.18 564.42 L1868.73 532.4 L1878.28 544.98 L1887.83 492.38 L1897.38 495.81 L1906.92 527.83 L1916.47 527.83 L1926.02 530.11 L1935.56 485.52 L1945.11 588.43 L1954.66 560.99 L1964.21 550.7 L1973.75 530.11 L1983.3 560.99 L1992.85 485.52 L2002.4 518.68 L2011.94 552.98 L2021.49 540.41 L2031.04 518.68 L2040.59 519.82 L2050.13 533.54 L2059.68 527.83 L2069.23 447.78 L2078.78 532.4 L2088.32 510.67 L2097.87 536.98 L2107.42 486.66 L2116.97 501.53 L2126.51 445.49 L2136.06 539.26 L2145.61 508.39 L2155.16 495.81 L2164.7 548.41 L2174.25 536.98 L2183.8 547.27 L2193.35 581.57 L2202.89 508.39 L2212.44 535.83 L2221.99 581.57 L2231.54 544.98 L2241.09 573.57 L2250.63 542.69 L2260.18 557.56 L2269.73 581.57 L2279.27 564.42 L2288.82 472.94 L2298.37 575.85 L2307.92 527.83 L2317.46 558.7 L2327.01 597.58 L2336.56 531.26 L2346.11 467.22 L2355.65 469.51 L2365.2 503.81 L2374.75 535.83 L2384.3 586.15 L2393.84 611.3 L2403.39 543.84 L2412.94 525.54 L2422.49 546.12 L2432.03 518.68 L2441.58 557.56 L2451.13 490.09 L2460.68 453.5 L2470.22 494.67 L2479.77 524.4 L2489.32 523.25 L2498.87 483.23 L2508.41 461.5 L2517.96 487.8 L2527.51 510.67 L2537.06 506.1 L2546.6 476.37 L2556.15 446.64 L2565.7 512.96" fill="none" stroke="#72cfdf" stroke-width="2" stroke-linejoin="round"/>
<path d="M1420 498.1 L1429.55 531.26 L1439.1 580.43 L1448.64 540.41 L1458.19 533.54 L1467.74 475.23 L1477.29 517.54 L1486.83 503.81 L1496.38 531.26 L1505.93 508.39 L1515.47 555.27 L1525.02 522.11 L1534.57 536.98 L1544.12 611.3 L1553.66 487.8 L1563.21 524.4 L1572.76 522.11 L1582.31 530.11 L1591.86 519.82 L1601.4 507.24 L1610.95 493.52 L1620.5 555.27 L1630.05 487.8 L1639.59 501.53 L1649.14 506.1 L1658.69 510.67 L1668.23 512.96 L1677.78 524.4 L1687.33 536.98 L1696.88 512.96 L1706.42 491.23 L1715.97 515.25 L1725.52 526.68 L1735.07 490.09 L1744.61 542.69 L1754.16 498.1 L1763.71 546.12 L1773.26 556.42 L1782.8 548.41 L1792.35 459.22 L1801.9 530.11 L1811.45 543.84 L1820.99 542.69 L1830.54 475.23 L1840.09 508.39 L1849.64 558.7 L1859.18 500.38 L1868.73 532.4 L1878.28 518.68 L1887.83 558.7 L1897.38 568.99 L1906.92 510.67 L1916.47 506.1 L1926.02 525.54 L1935.56 550.7 L1945.11 514.11 L1954.66 566.71 L1964.21 549.55 L1973.75 503.81 L1983.3 478.66 L1992.85 475.23 L2002.4 518.68 L2011.94 487.8 L2021.49 519.82 L2031.04 490.09 L2040.59 477.51 L2050.13 503.81 L2059.68 543.84 L2069.23 526.68 L2078.78 564.42 L2088.32 487.8 L2097.87 477.51 L2107.42 492.38 L2116.97 543.84 L2126.51 526.68 L2136.06 533.54 L2145.61 508.39 L2155.16 548.41 L2164.7 508.39 L2174.25 535.83 L2183.8 482.09 L2193.35 494.67 L2202.89 563.28 L2212.44 488.95 L2221.99 447.78 L2231.54 490.09 L2241.09 522.11 L2250.63 522.11 L2260.18 525.54 L2269.73 487.8 L2279.27 546.12 L2288.82 548.41 L2298.37 485.52 L2307.92 502.67 L2317.46 531.26 L2327.01 499.24 L2336.56 560.99 L2346.11 453.5 L2355.65 453.5 L2365.2 482.09 L2374.75 572.42 L2384.3 413.48 L2393.84 458.07 L2403.39 516.39 L2412.94 494.67 L2422.49 487.8 L2432.03 539.26 L2441.58 542.69 L2451.13 471.8 L2460.68 550.7 L2470.22 531.26 L2479.77 540.41 L2489.32 531.26 L2498.87 467.22 L2508.41 564.42 L2517.96 563.28 L2527.51 555.27 L2537.06 526.68 L2546.6 494.67 L2556.15 447.78 L2565.7 528.97 L2565.7 671 L1420 671 Z" fill="#ec8943" fill-opacity="0.1" stroke="none"/>
<path d="M1420 498.1 L1429.55 531.26 L1439.1 580.43 L1448.64 540.41 L1458.19 533.54 L1467.74 475.23 L1477.29 517.54 L1486.83 503.81 L1496.38 531.26 L1505.93 508.39 L1515.47 555.27 L1525.02 522.11 L1534.57 536.98 L1544.12 611.3 L1553.66 487.8 L1563.21 524.4 L1572.76 522.11 L1582.31 530.11 L1591.86 519.82 L1601.4 507.24 L1610.95 493.52 L1620.5 555.27 L1630.05 487.8 L1639.59 501.53 L1649.14 506.1 L1658.69 510.67 L1668.23 512.96 L1677.78 524.4 L1687.33 536.98 L1696.88 512.96 L1706.42 491.23 L1715.97 515.25 L1725.52 526.68 L1735.07 490.09 L1744.61 542.69 L1754.16 498.1 L1763.71 546.12 L1773.26 556.42 L1782.8 548.41 L1792.35 459.22 L1801.9 530.11 L1811.45 543.84 L1820.99 542.69 L1830.54 475.23 L1840.09 508.39 L1849.64 558.7 L1859.18 500.38 L1868.73 532.4 L1878.28 518.68 L1887.83 558.7 L1897.38 568.99 L1906.92 510.67 L1916.47 506.1 L1926.02 525.54 L1935.56 550.7 L1945.11 514.11 L1954.66 566.71 L1964.21 549.55 L1973.75 503.81 L1983.3 478.66 L1992.85 475.23 L2002.4 518.68 L2011.94 487.8 L2021.49 519.82 L2031.04 490.09 L2040.59 477.51 L2050.13 503.81 L2059.68 543.84 L2069.23 526.68 L2078.78 564.42 L2088.32 487.8 L2097.87 477.51 L2107.42 492.38 L2116.97 543.84 L2126.51 526.68 L2136.06 533.54 L2145.61 508.39 L2155.16 548.41 L2164.7 508.39 L2174.25 535.83 L2183.8 482.09 L2193.35 494.67 L2202.89 563.28 L2212.44 488.95 L2221.99 447.78 L2231.54 490.09 L2241.09 522.11 L2250.63 522.11 L2260.18 525.54 L2269.73 487.8 L2279.27 546.12 L2288.82 548.41 L2298.37 485.52 L2307.92 502.67 L2317.46 531.26 L2327.01 499.24 L2336.56 560.99 L2346.11 453.5 L2355.65 453.5 L2365.2 482.09 L2374.75 572.42 L2384.3 413.48 L2393.84 458.07 L2403.39 516.39 L2412.94 494.67 L2422.49 487.8 L2432.03 539.26 L2441.58 542.69 L2451.13 471.8 L2460.68 550.7 L2470.22 531.26 L2479.77 540.41 L2489.32 531.26 L2498.87 467.22 L2508.41 564.42 L2517.96 563.28 L2527.51 555.27 L2537.06 526.68 L2546.6 494.67 L2556.15 447.78 L2565.7 528.97" fill="none" stroke="#ec8943" stroke-width="2" stroke-linejoin="round"/>
<text x="1407.9" y="312.2" font-size="22" fill="#d8d9da" text-anchor="end" font-weight="normal" textLength="58.3" lengthAdjust="spacingAndGlyphs" stroke="#d8d9da" stroke-width="0.53">9.00%</text>
<text x="1407.9" y="372" font-size="22" fill="#d8d9da" text-anchor="end" font-weight="normal" textLength="58.3" lengthAdjust="spacingAndGlyphs" stroke="#d8d9da" stroke-width="0.53">8.00%</text>
<text x="1407.9" y="433.4" font-size="22" fill="#d8d9da" text-anchor="end" font-weight="normal" textLength="58.3" lengthAdjust="spacingAndGlyphs" stroke="#d8d9da" stroke-width="0.53">7.00%</text>
<text x="1407.9" y="493.2" font-size="22" fill="#d8d9da" text-anchor="end" font-weight="normal" textLength="58.3" lengthAdjust="spacingAndGlyphs" stroke="#d8d9da" stroke-width="0.53">6.00%</text>
<text x="1407.9" y="553.3" font-size="22" fill="#d8d9da" text-anchor="end" font-weight="normal" textLength="58.3" lengthAdjust="spacingAndGlyphs" stroke="#d8d9da" stroke-width="0.53">5.00%</text>
<text x="1407.9" y="615" font-size="22" fill="#d8d9da" text-anchor="end" font-weight="normal" textLength="58.3" lengthAdjust="spacingAndGlyphs" stroke="#d8d9da" stroke-width="0.53">4.00%</text>
<text x="1407.9" y="675.4" font-size="22" fill="#d8d9da" text-anchor="end" font-weight="normal" textLength="58.3" lengthAdjust="spacingAndGlyphs" stroke="#d8d9da" stroke-width="0.53">3.00%</text>
<text x="1601.2" y="701.5" font-size="22" fill="#d8d9da" text-anchor="middle" font-weight="normal" textLength="52.82" lengthAdjust="spacingAndGlyphs" stroke="#d8d9da" stroke-width="0.53">16:50</text>
<text x="1792.2" y="701.5" font-size="22" fill="#d8d9da" text-anchor="middle" font-weight="normal" textLength="52.82" lengthAdjust="spacingAndGlyphs" stroke="#d8d9da" stroke-width="0.53">17:00</text>
<text x="1983.7" y="701.5" font-size="22" fill="#d8d9da" text-anchor="middle" font-weight="normal" textLength="52.82" lengthAdjust="spacingAndGlyphs" stroke="#d8d9da" stroke-width="0.53">17:10</text>
<text x="2175.2" y="701.5" font-size="22" fill="#d8d9da" text-anchor="middle" font-weight="normal" textLength="52.82" lengthAdjust="spacingAndGlyphs" stroke="#d8d9da" stroke-width="0.53">17:20</text>
<text x="2365.2" y="701.5" font-size="22" fill="#d8d9da" text-anchor="middle" font-weight="normal" textLength="52.82" lengthAdjust="spacingAndGlyphs" stroke="#d8d9da" stroke-width="0.53">17:30</text>
<text x="2557.2" y="701.5" font-size="22" fill="#d8d9da" text-anchor="middle" font-weight="normal" textLength="52.82" lengthAdjust="spacingAndGlyphs" stroke="#d8d9da" stroke-width="0.53">17:40</text>
<rect x="1368" y="741" width="23.2" height="6.8" rx="2.5" fill="#82b672"/>
<text x="1400" y="751.6" font-size="22.5" fill="#d8d9da" text-anchor="start" font-weight="normal" textLength="11.79" lengthAdjust="spacingAndGlyphs" stroke="#d8d9da" stroke-width="0.54">0</text>
<rect x="1432" y="741" width="23.3" height="6.8" rx="2.5" fill="#e9bb47"/>
<text x="1463.85" y="751.6" font-size="22.5" fill="#d8d9da" text-anchor="start" font-weight="normal" textLength="9.33" lengthAdjust="spacingAndGlyphs" stroke="#d8d9da" stroke-width="0.54">1</text>
<rect x="1495.8" y="741" width="23.3" height="6.8" rx="2.5" fill="#72cfdf"/>
<text x="1526.66" y="751.6" font-size="22.5" fill="#d8d9da" text-anchor="start" font-weight="normal" textLength="12.97" lengthAdjust="spacingAndGlyphs" stroke="#d8d9da" stroke-width="0.54">2</text>
<rect x="1559.8" y="741" width="23.2" height="6.8" rx="2.5" fill="#ec8943"/>
<text x="1590.27" y="751.6" font-size="22.5" fill="#d8d9da" text-anchor="start" font-weight="normal" textLength="12.86" lengthAdjust="spacingAndGlyphs" stroke="#d8d9da" stroke-width="0.54">3</text>
<path d="M104 867 H1317 M104 949 H1317 M104 1031 H1317 M104 1115 H1317 M104 1197 H1317 M104 1279 H1317 M295 866 V1280 M499 866 V1280 M701 866 V1280 M903 866 V1280 M1105 866 V1280 M1307 866 V1280" stroke="rgba(160,160,163,0.31)" stroke-width="2" fill="none"/>
<path d="M104.44 1251.78 L193.51 1255.15 L294.62 1253.7 L347.58 1255.15 L398.14 1254.67 L499.24 1252.74 L549.8 1255.15 L600.35 1255.63 L701.46 1254.18 L752.01 1255.63 L802.57 1254.67 L853.12 1252.26 L903.67 1254.67 L954.23 1252.26 L1055.33 1257.07 L1105.89 1254.18 L1156.44 1255.63 L1207 1252.74 L1306.66 1252.26 L1306.66 1279 L104.44 1279 Z" fill="#82b672" fill-opacity="0.1" stroke="none"/>
<path d="M104.44 1251.78 L193.51 1255.15 L294.62 1253.7 L347.58 1255.15 L398.14 1254.67 L499.24 1252.74 L549.8 1255.15 L600.35 1255.63 L701.46 1254.18 L752.01 1255.63 L802.57 1254.67 L853.12 1252.26 L903.67 1254.67 L954.23 1252.26 L1055.33 1257.07 L1105.89 1254.18 L1156.44 1255.63 L1207 1252.74 L1306.66 1252.26" fill="none" stroke="#82b672" stroke-width="2" stroke-linejoin="round"/>
<text x="40.07" y="871.9" font-size="22" fill="#d8d9da" text-anchor="start" font-weight="normal" textLength="52.09" lengthAdjust="spacingAndGlyphs" stroke="#d8d9da" stroke-width="0.53">100%</text>
<text x="51.58" y="954" font-size="22" fill="#d8d9da" text-anchor="start" font-weight="normal" textLength="40.36" lengthAdjust="spacingAndGlyphs" stroke="#d8d9da" stroke-width="0.53">80%</text>
<text x="51.58" y="1037.9" font-size="22" fill="#d8d9da" text-anchor="start" font-weight="normal" textLength="40.36" lengthAdjust="spacingAndGlyphs" stroke="#d8d9da" stroke-width="0.53">60%</text>
<text x="51.58" y="1119.7" font-size="22" fill="#d8d9da" text-anchor="start" font-weight="normal" textLength="40.36" lengthAdjust="spacingAndGlyphs" stroke="#d8d9da" stroke-width="0.53">40%</text>
<text x="51.58" y="1204.3" font-size="22" fill="#d8d9da" text-anchor="start" font-weight="normal" textLength="40.36" lengthAdjust="spacingAndGlyphs" stroke="#d8d9da" stroke-width="0.53">20%</text>
<text x="64.4" y="1285.8" font-size="22" fill="#d8d9da" text-anchor="start" font-weight="normal" textLength="27.03" lengthAdjust="spacingAndGlyphs" stroke="#d8d9da" stroke-width="0.53">0%</text>
<text x="295.2" y="1311.9" font-size="22" fill="#d8d9da" text-anchor="middle" font-weight="normal" textLength="52.82" lengthAdjust="spacingAndGlyphs" stroke="#d8d9da" stroke-width="0.53">16:50</text>
<text x="499.2" y="1311.9" font-size="22" fill="#d8d9da" text-anchor="middle" font-weight="normal" textLength="52.82" lengthAdjust="spacingAndGlyphs" stroke="#d8d9da" stroke-width="0.53">17:00</text>
<text x="701.2" y="1311.9" font-size="22" fill="#d8d9da" text-anchor="middle" font-weight="normal" textLength="52.82" lengthAdjust="spacingAndGlyphs" stroke="#d8d9da" stroke-width="0.53">17:10</text>
<text x="903.2" y="1311.9" font-size="22" fill="#d8d9da" text-anchor="middle" font-weight="normal" textLength="52.82" lengthAdjust="spacingAndGlyphs" stroke="#d8d9da" stroke-width="0.53">17:20</text>
<text x="1105.2" y="1311.9" font-size="22" fill="#d8d9da" text-anchor="middle" font-weight="normal" textLength="52.82" lengthAdjust="spacingAndGlyphs" stroke="#d8d9da" stroke-width="0.53">17:30</text>
<text x="1307.2" y="1311.9" font-size="22" fill="#d8d9da" text-anchor="middle" font-weight="normal" textLength="52.82" lengthAdjust="spacingAndGlyphs" stroke="#d8d9da" stroke-width="0.53">17:40</text>
<rect x="1356" y="896" width="572" height="48" fill="#252528"/>
<text x="1514.69" y="884.4" font-size="26" fill="#5bb8e8" text-anchor="start" font-weight="bold" textLength="37.51" lengthAdjust="spacingAndGlyphs" stroke="#5bb8e8" stroke-width="0.25">min</text>
<text x="1589.69" y="884.4" font-size="26" fill="#5bb8e8" text-anchor="start" font-weight="bold" textLength="42.35" lengthAdjust="spacingAndGlyphs" stroke="#5bb8e8" stroke-width="0.25">max</text>
<text x="1676.3" y="884.4" font-size="26" fill="#5bb8e8" text-anchor="start" font-weight="bold" textLength="35.85" lengthAdjust="spacingAndGlyphs" stroke="#5bb8e8" stroke-width="0.25">avg</text>
<text x="1733.11" y="884.4" font-size="26" fill="#5bb8e8" text-anchor="start" font-weight="bold" textLength="70.76" lengthAdjust="spacingAndGlyphs" stroke="#5bb8e8" stroke-width="0.25">current</text>
<text x="1863.4" y="884.4" font-size="26" fill="#5bb8e8" text-anchor="start" font-weight="bold" textLength="44.62" lengthAdjust="spacingAndGlyphs" stroke="#5bb8e8" stroke-width="0.25">total</text>
<rect x="1376.3" y="918.5" width="23.7" height="7" rx="2.5" fill="#7eb26d"/>
<text x="1413.5" y="926" font-size="23" fill="#d8d9da" text-anchor="start" font-weight="normal" textLength="36.99" lengthAdjust="spacingAndGlyphs" stroke="#d8d9da" stroke-width="0.55">cpu</text>
<text x="1523.85" y="926.2" font-size="22.5" fill="#d8d9da" text-anchor="start" font-weight="normal" textLength="27.81" lengthAdjust="spacingAndGlyphs" stroke="#d8d9da" stroke-width="0.54">5%</text>
<text x="1603.41" y="926.2" font-size="22.5" fill="#d8d9da" text-anchor="start" font-weight="normal" textLength="28.86" lengthAdjust="spacingAndGlyphs" stroke="#d8d9da" stroke-width="0.54">7%</text>
<text x="1682.81" y="926.2" font-size="22.5" fill="#d8d9da" text-anchor="start" font-weight="normal" textLength="28.86" lengthAdjust="spacingAndGlyphs" stroke="#d8d9da" stroke-width="0.54">6%</text>
<text x="1775.11" y="926.2" font-size="22.5" fill="#d8d9da" text-anchor="start" font-weight="normal" textLength="28.86" lengthAdjust="spacingAndGlyphs" stroke="#d8d9da" stroke-width="0.54">7%</text>
<text x="1855.19" y="926.2" font-size="22.5" fill="#d8d9da" text-anchor="start" font-weight="normal" textLength="52.51" lengthAdjust="spacingAndGlyphs" stroke="#d8d9da" stroke-width="0.54">155%</text>
<path d="M2041.72 1264.02 A268 268 0 1 1 2551.48 1264.02 L2455.43 1232.81 A167 167 0 1 0 2137.77 1232.81 Z" fill="#262628"/>
<path d="M2045.52 1262.78 A264 264 0 0 1 2033.54 1203.4 L2129.69 1195.29 A167.5 167.5 0 0 0 2137.3 1232.96 Z" fill="#56a642"/>
<path d="M2024.6 1269.58 A286 286 0 0 1 2555.38 1059.43 L2539.09 1067.09 A268 268 0 0 0 2041.72 1264.02 Z" fill="#56a642"/>
<path d="M2555.38 1059.43 A286 286 0 0 1 2582.04 1163.24 L2564.07 1164.37 A268 268 0 0 0 2539.09 1067.09 Z" fill="#c97a3a"/>
<path d="M2582.04 1163.24 A286 286 0 0 1 2568.6 1269.58 L2551.48 1264.02 A268 268 0 0 0 2564.07 1164.37 Z" fill="#d4463f"/>
<text x="2181.38" y="1240.6" font-size="97" fill="#d8d9da" text-anchor="start" font-weight="bold" textLength="222.73" lengthAdjust="spacingAndGlyphs" stroke="#d8d9da" stroke-width="0.25">5.8%</text>
</svg></body></html>
